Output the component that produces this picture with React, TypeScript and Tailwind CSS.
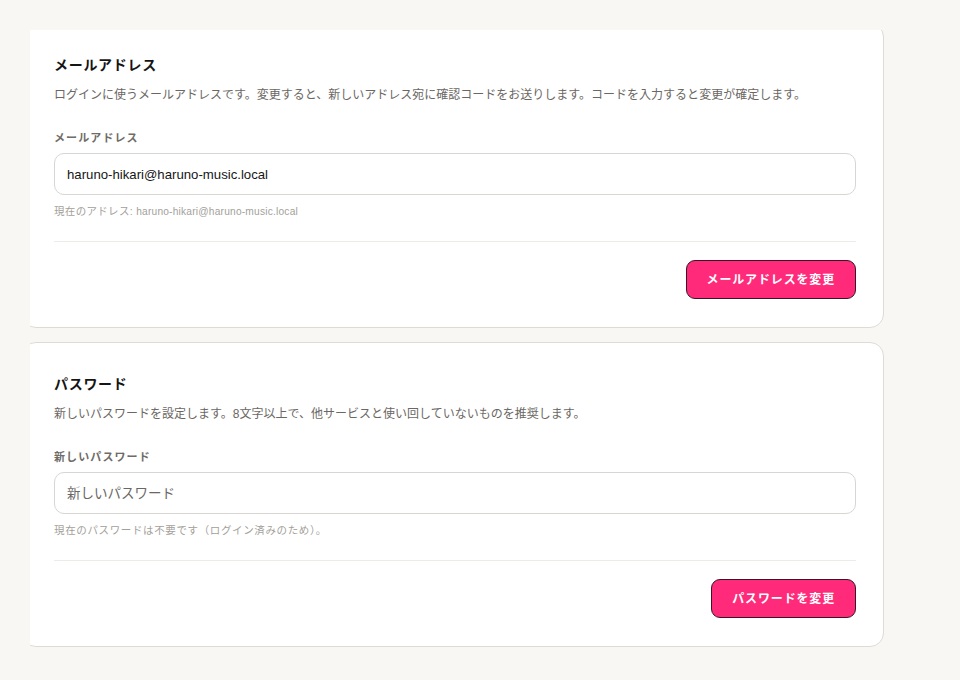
import { useState } from "react";

const font = { fontFamily: '"Liberation Sans", "Noto Sans CJK JP", sans-serif' };

function Card({
  title,
  desc,
  label,
  hint,
  button,
  children,
  first,
}: {
  title: string;
  desc: string;
  label: string;
  hint: React.ReactNode;
  button: string;
  children: React.ReactNode;
  first?: boolean;
}) {
  return (
    <section
      className={`-ml-2 w-[862px] rounded-[14px] border border-[#dedbd6] bg-white pl-[31px] pr-[27px] pt-[30px] pb-7 ${first ? "-mt-[7px]" : "mt-[14px]"}`}
    >
      <h2 className="text-[14px] leading-[22px] font-bold tracking-[0.05em] text-[#151515]">{title}</h2>
      <p className="mt-2.5 text-[12px] leading-[18px] text-[#6b6763]">{desc}</p>
      <label className="mt-[26px] block text-[11px] leading-4 font-semibold tracking-[0.1em] text-[#6f6b66]">{label}</label>
      <div className="mt-[7px]">{children}</div>
      <p className="mt-2 h-4 text-[10.5px] leading-4 tracking-[0.03em] text-[#a39f9a]">{hint}</p>
      <div className="mt-[22px] h-px bg-[#ecebe8]" />
      <div className="mt-[18px] flex justify-end">
        <button className="h-[39px] rounded-[9px] border border-[#3b1426] bg-[#ff2b7a] px-5 text-[12px] font-bold tracking-[0.07em] text-white">
          {button}
        </button>
      </div>
    </section>
  );
}

export default function App() {
  const [email, setEmail] = useState("haruno-hikari@haruno-music.local");
  const [password, setPassword] = useState("");

  return (
    <div className="min-h-[680px] bg-[#f8f7f3] pt-[30px] pl-[30px]" style={font}>
      <div className="w-[856px] overflow-hidden pr-1 pb-1">
        <Card
          first
          title="メールアドレス"
          desc="ログインに使うメールアドレスです。変更すると、新しいアドレス宛に確認コードをお送りします。コードを入力すると変更が確定します。"
          label="メールアドレス"
          hint={
            <>
              現在のアドレス: <span className="text-[10.2px] leading-4 tracking-[0.02em]">haruno-hikari@haruno-music.local</span>
            </>
          }
          button="メールアドレスを変更"
        >
          <input
            value={email}
            onChange={(e) => setEmail(e.target.value)}
            className="h-[42px] w-full rounded-[10px] border border-[#d8d6d2] bg-white px-3 text-[13.2px] text-[#151515] outline-none"
          />
        </Card>
        <Card
          title="パスワード"
          desc="新しいパスワードを設定します。8文字以上で、他サービスと使い回していないものを推奨します。"
          label="新しいパスワード"
          hint={<span className="tracking-[0.06em]">現在のパスワードは不要です（ログイン済みのため）。</span>}
          button="パスワードを変更"
        >
          <input
            type="password"
            value={password}
            onChange={(e) => setPassword(e.target.value)}
            placeholder="新しいパスワード"
            className="h-[42px] w-full rounded-[10px] border border-[#d8d6d2] bg-white px-3 text-[13.5px] text-[#151515] outline-none placeholder:text-[#6b6763]"
          />
        </Card>
      </div>
    </div>
  );
}
